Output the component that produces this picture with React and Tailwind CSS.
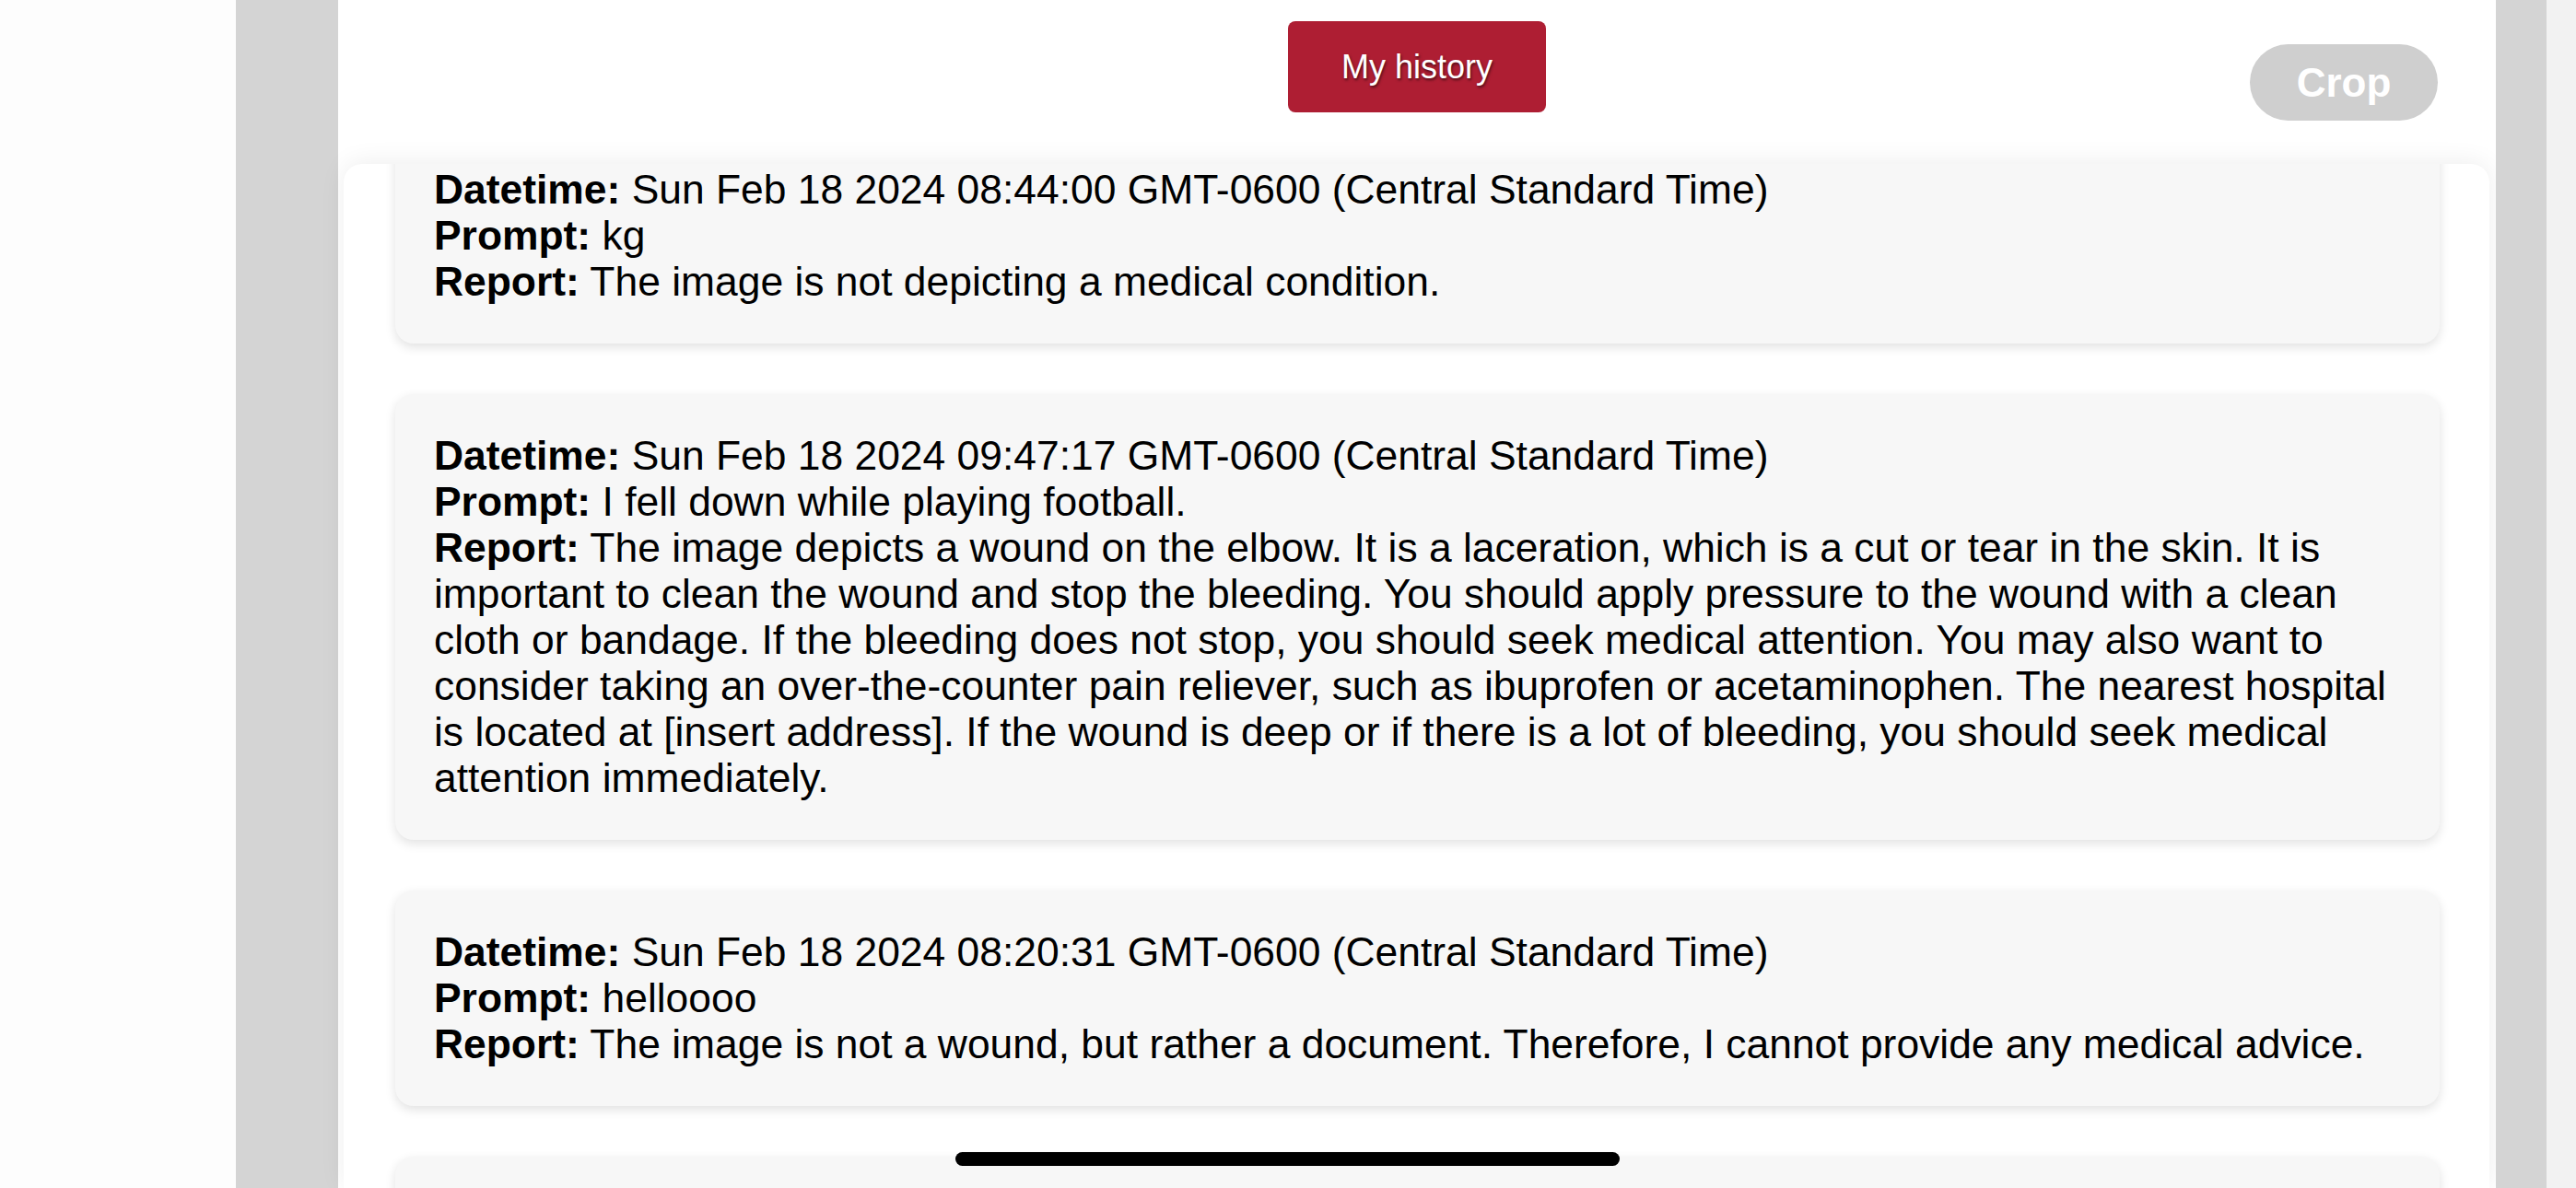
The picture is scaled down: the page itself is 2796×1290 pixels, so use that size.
import React from "react";

const entries = [
  {
    datetime: "Sun Feb 18 2024 08:44:00 GMT-0600 (Central Standard Time)",
    prompt: "kg",
    report: "The image is not depicting a medical condition.",
  },
  {
    datetime: "Sun Feb 18 2024 09:47:17 GMT-0600 (Central Standard Time)",
    prompt: "I fell down while playing football.",
    report:
      "The image depicts a wound on the elbow. It is a laceration, which is a cut or tear in the skin. It is important to clean the wound and stop the bleeding. You should apply pressure to the wound with a clean cloth or bandage. If the bleeding does not stop, you should seek medical attention. You may also want to consider taking an over-the-counter pain reliever, such as ibuprofen or acetaminophen. The nearest hospital is located at [insert address]. If the wound is deep or if there is a lot of bleeding, you should seek medical attention immediately.",
  },
  {
    datetime: "Sun Feb 18 2024 08:20:31 GMT-0600 (Central Standard Time)",
    prompt: "helloooo",
    report:
      "The image is not a wound, but rather a document. Therefore, I cannot provide any medical advice.",
  },
];

function Card({ e }) {
  return (
    <div className="shrink-0 rounded-[20px] bg-[#f7f7f7] p-[42px] text-[44.4px] leading-[50px] text-black shadow-[0_4px_12px_rgba(0,0,0,0.12)]">
      <div>
        <b>Datetime:</b> {e.datetime}
      </div>
      <div>
        <b>Prompt:</b> {e.prompt}
      </div>
      <div>
        <b>Report:</b> {e.report}
      </div>
    </div>
  );
}

export default function App() {
  return (
    <div
      className="relative flex h-[1290px] w-[2796px] overflow-hidden bg-white"
      style={{ fontFamily: '"Liberation Sans", Arial, Helvetica, sans-serif' }}
    >
      <div className="w-[256px] shrink-0 bg-[#fdfdfd]" />
      <div className="w-[111px] shrink-0 bg-[#d4d4d4]" />
      <main className="flex w-[2342px] shrink-0 flex-col bg-white">
        <header className="grid h-[178px] shrink-0 grid-cols-[1fr_auto_1fr]">
          <div />
          <div className="pt-[23px]">
            <button className="flex h-[99px] w-[280px] items-center justify-center rounded-[8px] bg-[#ae1e33] text-[36px] text-white [text-shadow:1px_2px_3px_rgba(0,0,0,0.55)]">
              My history
            </button>
          </div>
          <div className="flex items-start justify-end pr-[63px] pt-[48px]">
            <button className="flex h-[83px] w-[204px] items-center justify-center rounded-full bg-[#cfcfcf] text-[44px] font-bold text-white">
              Crop
            </button>
          </div>
        </header>
        <section className="ml-[6px] mr-[7px] flex-1 overflow-hidden rounded-t-[20px] bg-white pl-[56px] pr-[54px] shadow-[0_-2px_28px_rgba(0,0,0,0.07)]">
          <div className="-mt-[39px] flex flex-col gap-[55px]">
            {entries.map((e, i) => (
              <Card key={i} e={e} />
            ))}
            <div className="h-[234px] shrink-0 rounded-[20px] bg-[#f7f7f7] shadow-[0_4px_12px_rgba(0,0,0,0.12)]" />
          </div>
        </section>
      </main>
      <div className="w-[55px] shrink-0 bg-[#d4d4d4]" />
      <div className="w-[32px] shrink-0 bg-[#f2f2f2]" />
      <div className="absolute left-[1037px] top-[1251px] h-[15px] w-[721px] rounded-full bg-black" />
    </div>
  );
}
